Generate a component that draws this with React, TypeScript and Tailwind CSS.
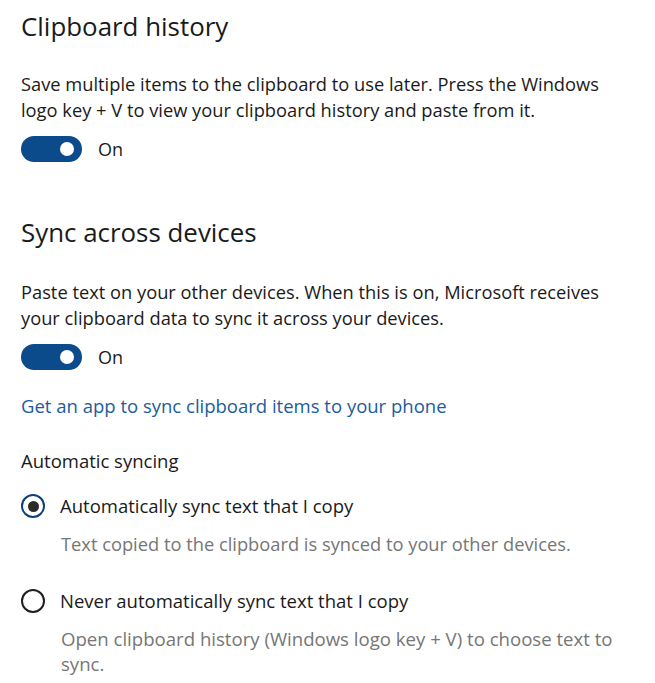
import React from "react";

function Toggle() {
  return (
    <div className="flex items-center gap-[16px]">
      <div className="flex h-[26px] w-[61px] items-center justify-end rounded-full bg-[#0b4a8b] pr-[8px]">
        <div className="h-[14px] w-[14px] rounded-full bg-white" />
      </div>
      <span className="text-[18px] leading-[26px] text-[#1a1a1a]">On</span>
    </div>
  );
}

function Radio({ checked, label }: { checked: boolean; label: string }) {
  return (
    <div className="flex items-center gap-[15px]">
      {checked ? (
        <div className="flex h-[24px] w-[24px] items-center justify-center rounded-full border-[2.5px] border-[#0b3f7c]">
          <div className="h-[11px] w-[11px] rounded-full bg-[#2b2b2b]" />
        </div>
      ) : (
        <div className="h-[24px] w-[24px] rounded-full border-[2px] border-[#1f1f1f]" />
      )}
      <span className="text-[18.5px] leading-[26px] text-[#1a1a1a]">{label}</span>
    </div>
  );
}

export default function App() {
  return (
    <div
      className="min-h-screen bg-white pl-[21px] pt-[8px] text-[#1a1a1a]"
      style={{ fontFamily: '"Open Sans", "Noto Sans", sans-serif' }}
    >
      <h1 className="text-[25.9px] leading-[36px] font-normal">Clipboard history</h1>
      <p className="mt-[27px] text-[18.3px] leading-[26px]">
        Save multiple items to the clipboard to use later. Press the Windows
        <br />
        logo key + V to view your clipboard history and paste from it.
      </p>
      <div className="mt-[13px]">
        <Toggle />
      </div>

      <h2 className="mt-[52px] text-[25.9px] leading-[36px] font-normal">Sync across devices</h2>
      <p className="mt-[29px] text-[18.3px] leading-[26px]">
        Paste text on your other devices. When this is on, Microsoft receives
        <br />
        your clipboard data to sync it across your devices.
      </p>
      <div className="mt-[13px]">
        <Toggle />
      </div>

      <a className="mt-[23px] block text-[18.5px] leading-[26px] text-[#1b5c9e]">
        Get an app to sync clipboard items to your phone
      </a>

      <div className="mt-[29px] text-[18.5px] leading-[26px]">Automatic syncing</div>

      <div className="mt-[19px]">
        <Radio checked label="Automatically sync text that I copy" />
      </div>
      <p className="mt-[12px] pl-[40px] text-[18.3px] leading-[26px] text-[#767676]">
        Text copied to the clipboard is synced to your other devices.
      </p>

      <div className="mt-[31px]">
        <Radio checked={false} label="Never automatically sync text that I copy" />
      </div>
      <p className="mt-[12px] pl-[40px] text-[18.6px] leading-[25px] text-[#767676]">
        Open clipboard history (Windows logo key + V) to choose text to
        <br />
        sync.
      </p>
    </div>
  );
}
